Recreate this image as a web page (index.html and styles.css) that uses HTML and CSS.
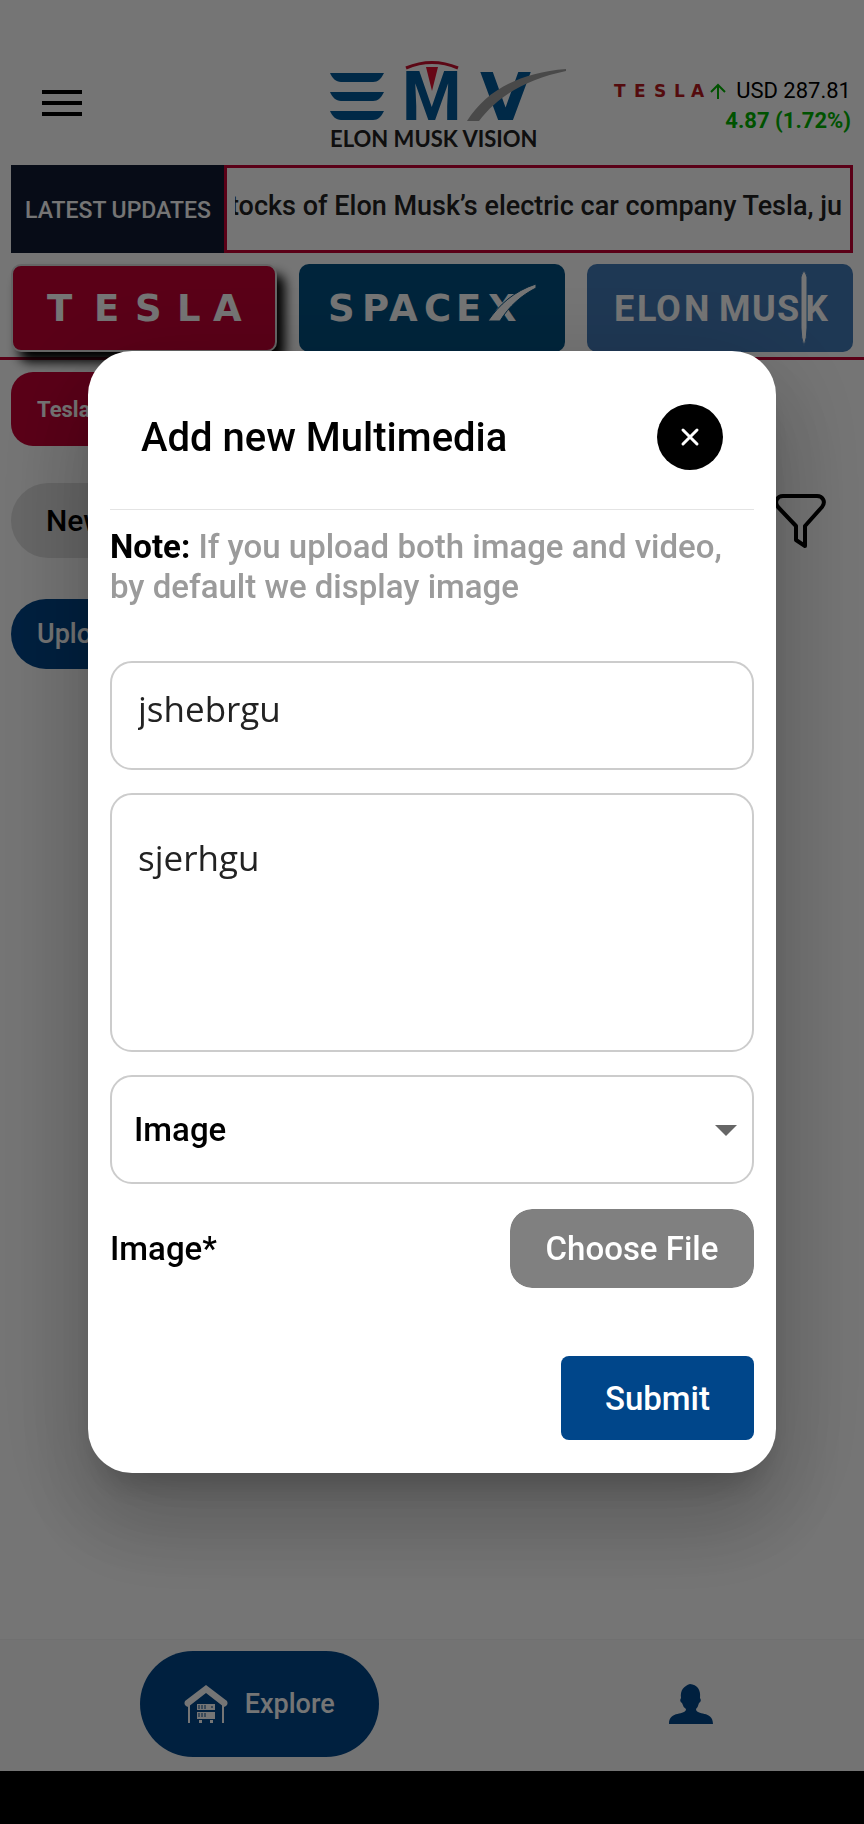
FILE: index.html
```html
<!DOCTYPE html>
<html lang="en">
<head>
    <meta charset="UTF-8">
    <meta name="viewport" content="width=device-width, initial-scale=1.0">
    <title>Elon Musk Vision</title>
    <link rel="stylesheet" href="styles.css">
</head>
<body>

    <div class="page">
        <!-- Header -->
        <header class="header">
            <button class="menu-btn" aria-label="Menu"><span></span><span></span><span></span></button>

            <svg class="logo" viewBox="0 0 240 92" width="240" height="92" role="img" aria-label="Elon Musk Vision">
                <g fill="#00599b">
                    <path d="M2 13H56C53 19 50 22 45 22H13C8 22 4 18 2 13Z"/>
                    <path d="M2 32H56C53 38 50 41 45 41H13C8 41 4 37 2 32Z"/>
                    <path d="M2 51H56C53 57 50 60 45 60H13C8 60 4 56 2 51Z"/>
                    <text class="logo-m" x="74" y="60">M</text>
                    <text class="logo-v" x="152" y="60">V</text>
                </g>
                <path d="M78 8Q104-3 130 8" fill="none" stroke="#c8102e" stroke-width="3"/>
                <path d="M98 7H110L104 31Z" fill="#e01030"/>
                <path d="M139 61C158 31 190 13 238 9V11C200 19 172 34 151 61Z" fill="#a0a0a0"/>
                <text class="logo-name" x="2" y="87">ELON MUSK VISION</text>
            </svg>

            <div class="stock">
                <div class="stock-price">
                    <svg viewBox="0 0 94 16" width="94" height="16">
                        <text class="mini-tesla" x="0 20 40 60 77" y="14">TESLA</text>
                    </svg>
                    <svg viewBox="0 0 16 18" width="16" height="18" fill="none" stroke="#00b400" stroke-width="2">
                        <path d="M8 17V3M1 10L8 3L15 10"/>
                    </svg>
                    <span>USD 287.81</span>
                </div>
                <div class="stock-change">4.87 (1.72%)</div>
            </div>
        </header>

        <!-- News ticker -->
        <div class="ticker">
            <div class="ticker-label">LATEST UPDATES</div>
            <div class="ticker-body">
                <div class="ticker-text"><span>Stocks of Elon Musk’s electric car company Tesla, ju</span></div>
            </div>
        </div>

        <!-- Company tabs -->
        <nav class="tabs">
            <button class="tab tab-tesla" aria-label="Tesla">
                <svg viewBox="0 0 200 80" width="200" height="80">
                    <text class="wordmark" x="3 50 91 133 169" y="53">TESLA</text>
                </svg>
            </button>
            <button class="tab tab-spacex" aria-label="SpaceX">
                <svg viewBox="0 0 212 80" width="212" height="80">
                    <text class="wordmark" x="2 36 63 98 130 162" y="53">SPACEX</text>
                    <path d="M162 53C173 37 188 23 210 16V20C196 27 183 38 174 53Z" fill="#fff" stroke="#005082"/>
                </svg>
            </button>
            <button class="tab tab-musk" aria-label="Elon Musk">
                <svg viewBox="0 0 212 80" width="212" height="80">
                    <text class="wordmark wordmark-small" x="0 23 42 70" y="53">ELON</text>
                    <text class="wordmark wordmark-small" x="105 138 163 191" y="53">MUSK</text>
                    <path d="M187 9Q190-2 193 9V60Q193 70 190 78Q187 70 187 60Z" fill="#fff" stroke="#437ab7"/>
                </svg>
            </button>
        </nav>

        <!-- Filters -->
        <main class="content">
            <button class="pill pill-tesla">Tesla</button>
            <div class="filter-row">
                <button class="pill pill-new">New</button>
                <button class="filter-btn" aria-label="Filter">
                    <svg viewBox="0 0 52 56" width="52" height="56" fill="none" stroke="#000" stroke-width="4" stroke-linejoin="round">
                        <path d="M9 3H43C49 3 52 9 48 14L31 33V53L22 47V33L4 14C0 9 3 3 9 3Z"/>
                    </svg>
                </button>
            </div>
            <button class="pill pill-upload">Upload</button>
        </main>

        <!-- Bottom navigation -->
        <nav class="bottom-nav">
            <div class="nav-cell">
                <button class="nav-explore">
                    <svg viewBox="0 0 44 38" width="44" height="38" fill="#fff">
                        <path d="M22 0L43 16Q45 20 40 22L22 8L4 22Q-1 20 1 16Z"/>
                        <path d="M4 20H6V38H4ZM38 20H40V38H38ZM13 19H31V25H13ZM13 27H31V34H13ZM15 35H18V38H15ZM26 35H29V38H26Z"/>
                        <path d="M15 20V24M18 20V24M21 20V24M15 28V32M18 28V32M21 28V32M28 21V23" stroke="#00468a" stroke-width="1"/>
                    </svg>
                    <span>Explore</span>
                </button>
            </div>
            <div class="nav-cell">
                <button class="nav-profile" aria-label="Profile">
                    <svg viewBox="0 0 44 40" width="44" height="40" fill="#00468a">
                        <path d="M21 0C28 1 32 5 31 14Q33 17 30 19Q29 23 27 25C27 32 44 26 44 40H0C0 26 17 32 17 25Q14 23 13 19Q10 17 12 14C11 6 15 2 21 0Z"/>
                    </svg>
                </button>
            </div>
        </nav>
        <div class="system-bar"></div>
    </div>

    <!-- Add multimedia dialog -->
    <div class="overlay">
        <form class="modal" role="dialog" aria-labelledby="modal-title">
            <div class="modal-header">
                <h2 id="modal-title">Add new Multimedia</h2>
                <button type="button" class="close-btn" aria-label="Close">
                    <svg viewBox="0 0 20 20" width="20" height="20" stroke="#fff" stroke-width="3" stroke-linecap="round">
                        <path d="M3 3L17 17M17 3L3 17"/>
                    </svg>
                </button>
            </div>

            <p class="note"><strong>Note:</strong> If you upload both image and video, by default we display image</p>

            <div class="fields">
                <input type="text" class="field" id="title" aria-label="Title" value="jshebrgu">
                <textarea class="field" id="description" aria-label="Description">sjerhgu</textarea>
                <div class="select-wrap">
                    <select class="field" id="type" aria-label="Media type">
                        <option>Image</option>
                        <option>Video</option>
                    </select>
                    <svg viewBox="0 0 22 11" width="22" height="11"><path d="M0 0H22L11 11Z" fill="#666"/></svg>
                </div>
            </div>

            <div class="file-row">
                <label for="image">Image*</label>
                <input type="file" id="image">
            </div>

            <button type="submit" class="submit-btn">Submit</button>
        </form>
    </div>

</body>
</html>
```
FILE: styles.css
```css
* {
    box-sizing: border-box;
}

body {
    margin: 0;
    font-family: Roboto, sans-serif;
    background-color: #fff;
}

button {
    border: none;
    padding: 0;
    font-family: inherit;
    background: none;
    cursor: pointer;
}

svg {
    display: block;
    overflow: visible;
}

.page {
    display: flex;
    flex-direction: column;
    min-height: 100vh;
}

/* Header */
.header {
    display: flex;
    align-items: center;
    justify-content: space-between;
    padding: 60px 13px 13px 42px;
}

.menu-btn {
    display: flex;
    flex-direction: column;
    gap: 7px;
    width: 40px;
    margin-bottom: 6px;
}

.menu-btn span {
    height: 4px;
    background-color: #000;
}

.logo {
    flex: none;
    margin-left: auto;
    margin-right: 46px;
}

.logo-m {
    font: bold 68px Roboto, sans-serif;
}

.logo-v {
    font: bold 66px "DejaVu Sans", sans-serif;
}

.logo-name {
    font: bold 22px Lato, sans-serif;
    fill: #222;
}

.stock {
    flex: none;
    font-size: 22px;
    line-height: 30px;
    text-align: right;
}

.stock-price {
    display: flex;
    align-items: center;
    gap: 2px;
}

.stock-price span {
    margin-left: 8px;
}

.mini-tesla {
    font: bold 17px "DejaVu Sans", sans-serif;
    fill: #b81820;
}

.stock-change {
    font-weight: 700;
    color: #00b400;
}

/* Ticker */
.ticker {
    display: flex;
    height: 88px;
    margin: 0 11px;
}

.ticker-label {
    display: flex;
    align-items: center;
    flex: none;
    width: 213px;
    padding: 2px 0 0 14px;
    font-size: 23px;
    font-weight: 500;
    white-space: nowrap;
    color: #fff;
    background-color: #101c33;
}

.ticker-body {
    flex: 1;
    min-width: 0;
    padding: 20px 8px;
    border: 3px solid #c40034;
}

.ticker-text {
    display: flex;
    justify-content: flex-end;
    overflow: hidden;
    white-space: nowrap;
    font-size: 27px;
    font-weight: 500;
    line-height: 36px;
    color: #222;
}

/* Tabs */
.tabs {
    display: grid;
    grid-template-columns: repeat(3, 1fr);
    gap: 22px;
    padding: 11px 11px 5px;
    border-bottom: 3px solid #c40034;
}

.tab {
    display: flex;
    align-items: center;
    justify-content: center;
    height: 88px;
    border-radius: 10px;
}

.tab-tesla {
    background-color: #c40034;
    border: 2px solid #ddd;
    box-shadow: 8px 10px 12px #000;
}

.tab-spacex {
    background-color: #005082;
}

.tab-musk {
    background-color: #437ab7;
}

.wordmark {
    font: bold 37px "DejaVu Sans", sans-serif;
    fill: #fff;
}

.wordmark-small {
    font-size: 36px;
    font-family: Roboto, sans-serif;
}

/* Filters */
.content {
    flex: 1;
    padding: 12px 11px;
}

.pill {
    display: block;
    border-radius: 38px;
    text-align: left;
    font-weight: 500;
    color: #fff;
}

.pill-tesla {
    width: 180px;
    height: 74px;
    padding: 0 26px;
    border-radius: 22px;
    font-size: 22px;
    font-weight: 700;
    background-color: #c40034;
}

.filter-row {
    display: flex;
    align-items: center;
    justify-content: space-between;
    padding: 37px 27px 41px 0;
}

.pill-new {
    width: 200px;
    height: 75px;
    padding: 0 35px;
    font-size: 30px;
    color: #000;
    background-color: #e0e0e0;
}

.pill-upload {
    width: 200px;
    height: 70px;
    padding: 0 26px;
    font-size: 27px;
    background-color: #00468a;
}

/* Bottom navigation */
.bottom-nav {
    display: grid;
    grid-template-columns: 3fr 2fr;
    padding: 11px 0 14px;
    border-top: 1px solid #f4f4f4;
    background-color: #fafafa;
}

.nav-cell {
    display: flex;
    align-items: center;
    justify-content: center;
}

.nav-explore {
    display: flex;
    align-items: center;
    gap: 17px;
    height: 106px;
    padding: 0 44px;
    border-radius: 53px;
    font-size: 27px;
    font-weight: 500;
    color: #fff;
    background-color: #00468a;
}

.system-bar {
    height: 53px;
    background-color: #000;
}

/* Dialog */
.overlay {
    position: fixed;
    inset: 0;
    display: flex;
    align-items: center;
    justify-content: center;
    padding: 0 88px;
    background-color: rgba(0, 0, 0, 0.54);
}

.modal {
    display: flex;
    flex-direction: column;
    width: 100%;
    padding: 0 22px 33px;
    border-radius: 44px;
    background-color: #fff;
    box-shadow: 0 24px 33px -15px rgba(0, 0, 0, 0.2),
        0 53px 84px 7px rgba(0, 0, 0, 0.14),
        0 20px 101px 18px rgba(0, 0, 0, 0.12);
}

.modal-header {
    display: flex;
    align-items: center;
    justify-content: space-between;
    padding: 53px 31px 39px;
    border-bottom: 1px solid #e4e4e4;
}

.modal-header h2 {
    margin: 0;
    font-size: 40px;
    font-weight: 500;
}

.close-btn {
    display: flex;
    align-items: center;
    justify-content: center;
    width: 66px;
    height: 66px;
    border-radius: 50%;
    background-color: #000;
}

.note {
    margin: 17px 0 54px;
    font-size: 33px;
    font-weight: 500;
    line-height: 40px;
    color: #9b9b9b;
}

.note strong {
    font-weight: 700;
    color: #000;
}

.fields {
    display: flex;
    flex-direction: column;
    gap: 23px;
}

.field {
    display: block;
    width: 100%;
    height: 109px;
    padding: 0 26px 14px;
    border: 2px solid #ccc;
    border-radius: 22px;
    font-family: "Open Sans", sans-serif;
    font-size: 35px;
    line-height: 40px;
    color: #222;
    background-color: #fff;
    outline: none;
}

textarea.field {
    height: 259px;
    padding-top: 43px;
    resize: none;
}

.select-wrap {
    position: relative;
}

select.field {
    padding: 0 22px;
    font-family: Roboto, sans-serif;
    font-size: 33px;
    font-weight: 500;
    color: #000;
    appearance: none;
}

.select-wrap svg {
    position: absolute;
    right: 17px;
    top: 50px;
    pointer-events: none;
}

.file-row {
    display: flex;
    align-items: center;
    justify-content: space-between;
    padding: 25px 0 68px;
    font-size: 33px;
    font-weight: 500;
}

.file-row input {
    width: 244px;
    height: 79px;
    overflow: hidden;
    border-radius: 22px;
    color: transparent;
}

.file-row input::file-selector-button {
    width: 244px;
    height: 79px;
    margin: 0;
    padding: 0;
    border: none;
    border-radius: 22px;
    font-family: Roboto, sans-serif;
    font-size: 33px;
    font-weight: 500;
    color: #fff;
    background-color: #808080;
}

.submit-btn {
    align-self: flex-end;
    height: 84px;
    padding: 0 44px;
    border-radius: 8px;
    font-size: 33px;
    font-weight: 500;
    color: #fff;
    background-color: #00468a;
}
```
